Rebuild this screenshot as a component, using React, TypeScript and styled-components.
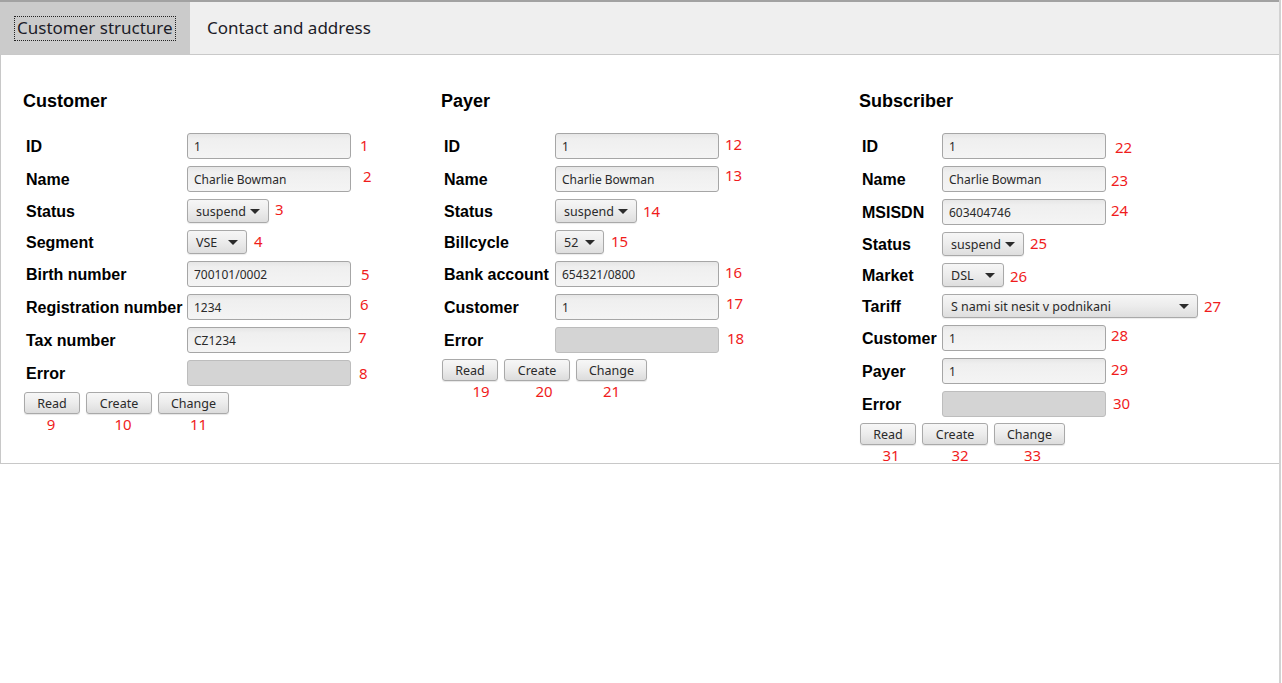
import React from 'react';
import styled, { createGlobalStyle } from 'styled-components';

const GlobalStyle = createGlobalStyle`
    html, body {
        margin: 0;
        padding: 0;
        background: #ffffff;
    }
`;

const Page = styled.div`
    display: flex;
    align-items: flex-start;
    min-height: 100vh;
`;

const Frame = styled.div`
    width: 1279px;
    border-top: 2px solid #a2a2a2;
`;

const EdgeStrip = styled.div`
    width: 2px;
    align-self: stretch;
    background: #d2d2d2;
`;

const TabBar = styled.div`
    display: flex;
    height: 52px;
    background: #efefef;
    border-bottom: 1px solid #c9c9c9;
`;

const Tab = styled.div<{ $active?: boolean }>`
    display: flex;
    align-items: center;
    padding: 0 16px;
    width: ${p => (p.$active ? '190px' : 'auto')};
    box-sizing: border-box;
    background: ${p => (p.$active ? '#cbcbcb' : 'transparent')};
    font-family: "Noto Sans", "Open Sans", sans-serif;
    font-size: 17px;
    color: #1c1c28;
    white-space: nowrap;
`;

const TabLabel = styled.span<{ $focused?: boolean }>`
    padding: 1px 2px 2px 2px;
    margin-left: -2px;
    border: 1px dotted ${p => (p.$focused ? '#222' : 'transparent')};
    line-height: 20px;
`;

const Content = styled.div`
    display: grid;
    grid-template-columns: 418px 418px 418px;
    padding: 35px 0 0 22px;
    border-left: 1px solid #c8c8c8;
    border-bottom: 1px solid #c8c8c8;
    height: 373px;
`;

const Column = styled.div`
    display: flex;
    flex-direction: column;
`;

const Heading = styled.h2`
    margin: 0 0 21px 0;
    height: 22px;
    line-height: 22px;
    font-family: "Liberation Sans", Arial, sans-serif;
    font-size: 18px;
    font-weight: bold;
    color: #000;
`;

const Rows = styled.div`
    display: flex;
    flex-direction: column;
    gap: 7px;
`;

const Row = styled.div`
    display: flex;
    align-items: center;
`;

const Label = styled.div<{ $w: number }>`
    width: ${p => p.$w}px;
    padding: 2px 0 0 3px;
    flex-shrink: 0;
    font-family: "Liberation Sans", Arial, sans-serif;
    font-size: 16px;
    font-weight: bold;
    color: #000;
    white-space: nowrap;
`;

const Field = styled.input<{ $disabled?: boolean }>`
    width: 164px;
    height: 26px;
    box-sizing: border-box;
    padding: 0 6px;
    border: 1px solid ${p => (p.$disabled ? '#bdbdbd' : '#a6a6a6')};
    border-radius: 3px;
    background: ${p => (p.$disabled
        ? '#d4d4d4'
        : 'linear-gradient(to bottom, #e6e6e6 0px, #efefef 5px, #f4f4f4 100%)')};
    font-family: "Noto Sans", "Open Sans", sans-serif;
    font-size: 12px;
    color: #2a2a2a;
    outline: none;
`;

const Combo = styled.div<{ $w: number }>`
    display: flex;
    align-items: center;
    justify-content: space-between;
    width: ${p => p.$w}px;
    height: 24px;
    box-sizing: border-box;
    padding: 0 8px 0 8px;
    border: 1px solid #a9a9a9;
    border-radius: 3px;
    background: linear-gradient(to bottom, #f6f6f6 0%, #ececec 50%, #dedede 100%);
    box-shadow: 0 1px 1px rgba(0, 0, 0, 0.08);
    font-family: "Noto Sans", "Open Sans", sans-serif;
    font-size: 12.5px;
    color: #2a2a2a;
    white-space: nowrap;
`;

const Arrow = styled.span`
    width: 0;
    height: 0;
    border-left: 5px solid transparent;
    border-right: 5px solid transparent;
    border-top: 5px solid #2b2b2b;
`;

const Num = styled.span<{ $dx: number; $dy: number }>`
    margin-left: ${p => p.$dx}px;
    position: relative;
    top: ${p => p.$dy}px;
    font-family: "Noto Sans", "Open Sans", sans-serif;
    font-size: 15px;
    line-height: 18px;
    color: #f01c1c;
`;

const Buttons = styled.div`
    display: flex;
    gap: 6px;
    margin-top: -1px;
    padding-left: 1px;
`;

const ButtonCell = styled.div`
    display: flex;
    flex-direction: column;
    align-items: center;
`;

const Button = styled.button<{ $w: number }>`
    width: ${p => p.$w}px;
    height: 22px;
    padding: 0;
    border: 1px solid #a9a9a9;
    border-radius: 3px;
    background: linear-gradient(to bottom, #f7f7f7 0%, #ececec 50%, #dcdcdc 100%);
    box-shadow: 0 1px 1px rgba(0, 0, 0, 0.1);
    font-family: "Noto Sans", "Open Sans", sans-serif;
    font-size: 12.5px;
    color: #2a2a2a;
`;

const ButtonNum = styled.span<{ $dx: number }>`
    position: relative;
    left: ${p => p.$dx}px;
    top: 1px;
    font-family: "Noto Sans", "Open Sans", sans-serif;
    font-size: 15px;
    line-height: 19px;
    color: #f01c1c;
`;

type Item =
    | { kind: 'text'; label: string; value: string; n: number; dx?: number; dy?: number }
    | { kind: 'error'; label: string; n: number; dx?: number; dy?: number }
    | { kind: 'combo'; label: string; value: string; w: number; n: number; dx?: number; dy?: number };

type Section = {
    title: string;
    labelWidth: number;
    items: Item[];
    buttons: { n: number; dx: number }[];
};

const sections: Section[] = [
    {
        title: 'Customer',
        labelWidth: 161,
        items: [
            { kind: 'text', label: 'ID', value: '1', n: 1, dx: 9, dy: -1 },
            { kind: 'text', label: 'Name', value: 'Charlie Bowman', n: 2, dx: 12, dy: -3 },
            { kind: 'combo', label: 'Status', value: 'suspend', w: 82, n: 3, dx: 6, dy: -2 },
            { kind: 'combo', label: 'Segment', value: 'VSE', w: 60, n: 4, dx: 7, dy: -1 },
            { kind: 'text', label: 'Birth number', value: '700101/0002', n: 5, dx: 10, dy: 0 },
            { kind: 'text', label: 'Registration number', value: '1234', n: 6, dx: 9, dy: -3 },
            { kind: 'text', label: 'Tax number', value: 'CZ1234', n: 7, dx: 7, dy: -3 },
            { kind: 'error', label: 'Error', n: 8, dx: 8, dy: 0 },
        ],
        buttons: [{ n: 9, dx: -1 }, { n: 10, dx: 4 }, { n: 11, dx: 5 }],
    },
    {
        title: 'Payer',
        labelWidth: 111,
        items: [
            { kind: 'text', label: 'ID', value: '1', n: 12, dx: 6, dy: -2 },
            { kind: 'text', label: 'Name', value: 'Charlie Bowman', n: 13, dx: 6, dy: -4 },
            { kind: 'combo', label: 'Status', value: 'suspend', w: 82, n: 14, dx: 6, dy: 0 },
            { kind: 'combo', label: 'Billcycle', value: '52', w: 49, n: 15, dx: 7, dy: -1 },
            { kind: 'text', label: 'Bank account', value: '654321/0800', n: 16, dx: 6, dy: -2 },
            { kind: 'text', label: 'Customer', value: '1', n: 17, dx: 7, dy: -4 },
            { kind: 'error', label: 'Error', n: 18, dx: 8, dy: -2 },
        ],
        buttons: [{ n: 19, dx: 11 }, { n: 20, dx: 7 }, { n: 21, dx: 0 }],
    },
    {
        title: 'Subscriber',
        labelWidth: 80,
        items: [
            { kind: 'text', label: 'ID', value: '1', n: 22, dx: 9, dy: 1 },
            { kind: 'text', label: 'Name', value: 'Charlie Bowman', n: 23, dx: 5, dy: 1 },
            { kind: 'text', label: 'MSISDN', value: '603404746', n: 24, dx: 5, dy: -2 },
            { kind: 'combo', label: 'Status', value: 'suspend', w: 82, n: 25, dx: 6, dy: -1 },
            { kind: 'combo', label: 'Market', value: 'DSL', w: 62, n: 26, dx: 6, dy: 1 },
            { kind: 'combo', label: 'Tariff', value: 'S nami sit nesit v podnikani', w: 256, n: 27, dx: 6, dy: 0 },
            { kind: 'text', label: 'Customer', value: '1', n: 28, dx: 5, dy: -3 },
            { kind: 'text', label: 'Payer', value: '1', n: 29, dx: 5, dy: -2 },
            { kind: 'error', label: 'Error', n: 30, dx: 7, dy: -1 },
        ],
        buttons: [{ n: 31, dx: 3 }, { n: 32, dx: 5 }, { n: 33, dx: 3 }],
    },
];

const buttonSpecs = [
    { text: 'Read', w: 56 },
    { text: 'Create', w: 66 },
    { text: 'Change', w: 71 },
];

function FormRow({ item, labelWidth }: { item: Item; labelWidth: number }) {
    return <Row>
        <Label $w={labelWidth}>{item.label}</Label>
        {item.kind === 'text' && <Field value={item.value} readOnly />}
        {item.kind === 'error' && <Field $disabled value="" readOnly />}
        {item.kind === 'combo' && (
            <Combo $w={item.w}>
                <span>{item.value}</span>
                <Arrow />
            </Combo>
        )}
        <Num $dx={item.dx ?? 7} $dy={item.dy ?? 0}>{item.n}</Num>
    </Row>;
}

function FormSection({ section }: { section: Section }) {
    return <Column>
        <Heading>{section.title}</Heading>
        <Rows>
            {section.items.map(item => (
                <FormRow key={item.n} item={item} labelWidth={section.labelWidth} />
            ))}
            <Buttons>
                {buttonSpecs.map((b, i) => (
                    <ButtonCell key={b.text}>
                        <Button $w={b.w}>{b.text}</Button>
                        <ButtonNum $dx={section.buttons[i].dx}>{section.buttons[i].n}</ButtonNum>
                    </ButtonCell>
                ))}
            </Buttons>
        </Rows>
    </Column>;
}

export default function App() {
    return <Page>
        <GlobalStyle />
        <Frame>
            <TabBar>
                <Tab $active>
                    <TabLabel $focused>Customer structure</TabLabel>
                </Tab>
                <Tab>
                    <TabLabel>Contact and address</TabLabel>
                </Tab>
            </TabBar>
            <Content>
                {sections.map(s => <FormSection key={s.title} section={s} />)}
            </Content>
        </Frame>
        <EdgeStrip />
    </Page>;
}
